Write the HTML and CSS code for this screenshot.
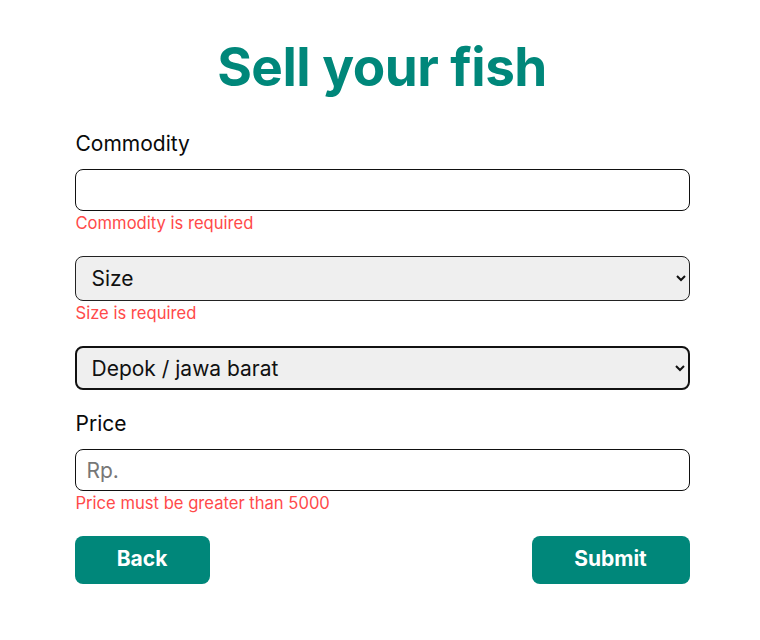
FILE: index.html
```html
<!DOCTYPE html>
<html>
<head>
<meta charset="utf-8">
<link rel="stylesheet" href="styles.css">
</head>
<body>
<div class="page">
  <h1 class="title">Sell your fish</h1>
  <form class="form">
    <div class="field">
      <label class="label">Commodity</label>
      <input class="input" type="text">
      <div class="error">Commodity is required</div>
    </div>
    <div class="field">
      <select class="select">
        <option>Size</option>
      </select>
      <div class="error">Size is required</div>
    </div>
    <div class="field field-plain">
      <select class="select select-active">
        <option>Depok / jawa barat</option>
      </select>
    </div>
    <div class="field">
      <label class="label">Price</label>
      <input class="input" type="text" placeholder="Rp.">
      <div class="error">Price must be greater than 5000</div>
    </div>
    <div class="actions">
      <button type="button" class="btn btn-back">Back</button>
      <button type="button" class="btn btn-submit">Submit</button>
    </div>
  </form>
</div>
</body>
</html>
```

FILE: styles.css
```css
* { box-sizing: border-box; }
body {
  margin: 0;
  font-family: Inter, "Noto Sans", sans-serif;
  background: #fff;
  color: #111;
}
.page {
  width: 615px;
  margin: 0 auto;
  padding-top: 35px;
  position: relative;
  left: 2px;
}
.title {
  margin: 0 0 33px;
  text-align: center;
  font-size: 53px;
  line-height: 64px;
  font-weight: 700;
  color: #00877a;
  letter-spacing: -0.5px;
}
.form { display: flex; flex-direction: column; }
.field { display: flex; flex-direction: column; margin-bottom: 23px; }
.field-plain { margin-bottom: 22px; }
.label {
  font-size: 21px;
  line-height: 24px;
  margin-bottom: 13px;
  padding-left: 1px;
  color: #0a0a0a;
}
.input {
  height: 42px;
  border: 1px solid #111;
  border-radius: 8px;
  padding: 0 11px;
  font-family: inherit;
  font-size: 21px;
  color: #111;
  background: #fff;
}
.input::placeholder { color: #777; }
.select {
  height: 45px;
  border: 1px solid #222;
  border-radius: 8px;
  padding: 0 11px 0 12px;
  font-family: inherit;
  font-size: 21px;
  color: #111;
  background-color: #efefef;
}
.select-active { height: 44px; border: 2px solid #111; padding-left: 11px; }
.error {
  margin-top: 2px;
  padding-left: 1px;
  font-size: 16.6px;
  line-height: 20px;
  color: #ff4a4a;
}
.actions {
  display: flex;
  justify-content: space-between;
}
.btn {
  height: 48px;
  border: none;
  border-radius: 8px;
  padding: 0 0 3px;
  background: #00877a;
  color: #fff;
  font-family: inherit;
  font-size: 21px;
  font-weight: 700;
}
.btn-back { width: 135px; }
.btn-submit { width: 158px; }
```
